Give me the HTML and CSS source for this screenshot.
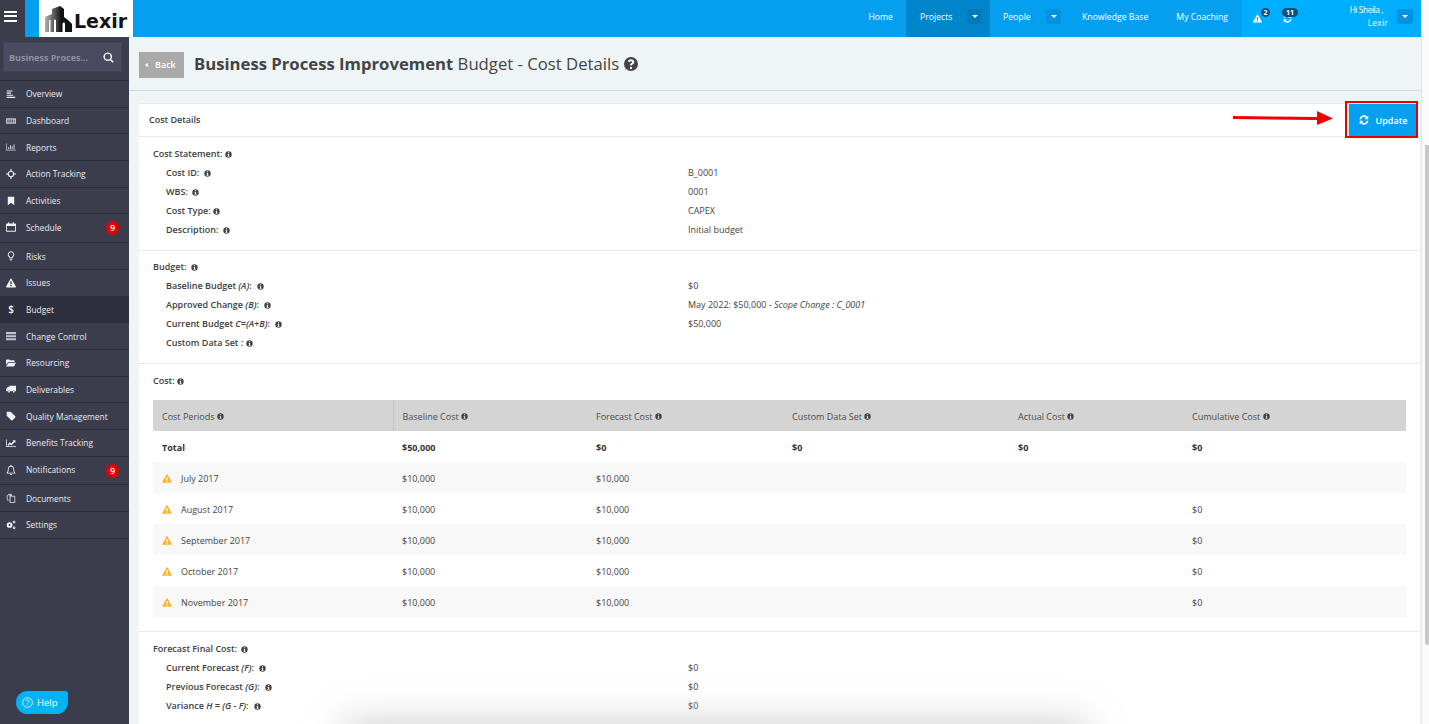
FILE: index.html
```html
<!DOCTYPE html>
<html lang="en">
<head>
<meta charset="utf-8">
<title>Business Process Improvement Budget - Cost Details</title>
<link rel="stylesheet" href="styles.css">
</head>
<body>
<svg class="defs" width="0" height="0" aria-hidden="true">
  <symbol id="i-info" viewBox="0 0 12 12"><path fill-rule="evenodd" d="M6 .5a5.500 5.500 0 1 0 0 11 5.500 5.500 0 0 0 0-11zM5 2.200h2v1.600H5zM4.500 5h2.500v3.600h.8V10H4.300V8.600h.9V6.300h-.7z"/></symbol>
  <symbol id="i-help" viewBox="0 0 14 14"><path fill-rule="evenodd" d="M7 0a7 7 0 1 0 0 14A7 7 0 0 0 7 0zM6 10h2v2H6zM7 2.300c1.900 0 3.300 1.100 3.300 2.700 0 1.200-.7 1.800-1.400 2.300-.6.400-.9.700-.9 1.200H6c0-1.200.5-1.900 1.300-2.400.6-.4.900-.6.900-1.100 0-.4-.5-.8-1.200-.8-.7 0-1.300.4-1.700 1L3.700 4.100C4.400 3 5.500 2.300 7 2.300z"/></symbol>
  <symbol id="i-warn" viewBox="0 0 14 13"><path fill-rule="evenodd" d="M7 .3c.3 0 .6.200.8.500l6 10.700c.3.600-.1 1.300-.8 1.300H1c-.7 0-1.100-.7-.8-1.300L6.200.8C6.400.5 6.700.3 7 .3zM6 4.200l.2 4.300h1.600L8 4.200zM6 9.400v1.800h2V9.400z"/></symbol>
  <symbol id="i-sync" viewBox="0 0 14 14"><path d="M13 .8v5H8l1.900-1.900A4.300 4.300 0 0 0 2.900 5.800H.6A6.500 6.500 0 0 1 11.500 2.300zM1 13.200v-5h5l-1.900 1.900a4.300 4.300 0 0 0 7-1.900h2.300A6.500 6.500 0 0 1 2.500 11.700z"/></symbol>
  <symbol id="i-overview" viewBox="0 0 14 14"><path d="M1 2h8v1.600H1zM1 5h6v1.600H1zM1 8h9v1.600H1zM1 11h12v1.600H1z"/></symbol>
  <symbol id="i-dash" viewBox="0 0 14 14"><path fill-rule="evenodd" d="M1 3h12a1 1 0 0 1 1 1v6a1 1 0 0 1-1 1H1a1 1 0 0 1-1-1V4a1 1 0 0 1 1-1zM2 5v4h1.500V5zM5 5v4h1.500V5zM8 5v4h1.500V5zM11 5v4h1V5z"/></symbol>
  <symbol id="i-chart" viewBox="0 0 14 14"><path d="M0 2h1v9h13v1H0zM3 7h1.500v3H3zM5.500 4.500H7V10H5.500zM8 6h1.500v4H8zM10.500 3H12v7h-1.500z"/></symbol>
  <symbol id="i-target" viewBox="0 0 14 14"><path fill-rule="evenodd" d="M6.200 0h1.600v2.300a4.800 4.800 0 0 1 3.900 3.900H14v1.600h-2.300a4.800 4.800 0 0 1-3.900 3.900V14H6.200v-2.300a4.800 4.800 0 0 1-3.900-3.900H0V6.200h2.300a4.800 4.800 0 0 1 3.900-3.900zM7 4a3 3 0 1 0 0 6 3 3 0 0 0 0-6z"/></symbol>
  <symbol id="i-bookmark" viewBox="0 0 14 14"><path d="M2.500 1h9v12L7 9.500 2.500 13z"/></symbol>
  <symbol id="i-cal" viewBox="0 0 14 14"><path fill-rule="evenodd" d="M3 .5h1.500V2h5V.5H11V2h2a1 1 0 0 1 1 1v9.500a1 1 0 0 1-1 1H1a1 1 0 0 1-1-1V3a1 1 0 0 1 1-1h2zM1.200 5.500v6.800h11.600V5.500z"/></symbol>
  <symbol id="i-bulb" viewBox="0 0 14 14"><path fill-rule="evenodd" d="M7 .5a4.500 4.500 0 0 1 3 7.800c-.6.600-.9 1.200-1 1.900H5c-.1-.7-.4-1.300-1-1.900A4.500 4.500 0 0 1 7 .5zm0 1.300a3.200 3.200 0 0 0-2.100 5.600c.5.500.9 1 1.100 1.600h2c.2-.6.600-1.100 1.100-1.600A3.200 3.200 0 0 0 7 1.800zM5.200 11h3.600v1.200H5.200zM6 12.800h2v1H6z"/></symbol>
  <symbol id="i-server" viewBox="0 0 14 14"><path d="M0 1.500h14v3H0zM0 5.800h14v3H0zM0 10h14v3H0z"/></symbol>
  <symbol id="i-folder" viewBox="0 0 14 14"><path d="M0 3a1 1 0 0 1 1-1h3.300l1.200 1.300H11a1 1 0 0 1 1 1V5.500H3.300L0 9.500zM3.800 6.500H14l-3 5.500H0z"/></symbol>
  <symbol id="i-truck" viewBox="0 0 14 14"><path d="M5 2.500h9v7.800h-1.500a1.700 1.700 0 0 0-3.300 0H5.800a1.700 1.700 0 0 0-3.300 0H0V7l3-3h2zM4.200 9.500a1.200 1.200 0 1 1 0 2.400 1.200 1.200 0 0 1 0-2.400zM10.800 9.500a1.200 1.200 0 1 1 0 2.400 1.200 1.200 0 0 1 0-2.400z"/></symbol>
  <symbol id="i-tag" viewBox="0 0 14 14"><path d="M1 1h5.500L13 7.500a1.200 1.200 0 0 1 0 1.700L9.200 13a1.200 1.200 0 0 1-1.700 0L1 6.500z"/></symbol>
  <symbol id="i-line" viewBox="0 0 14 14"><path d="M0 2h1v9.500h13v1H0zM2.200 9.400l3-3.500 2.300 1.800 3-3.500-1.200-1.100H13.200v3.800l-1.200-1.200-4.300 4.700-2.400-1.800-2.300 2.700z"/></symbol>
  <symbol id="i-bell" viewBox="0 0 14 14"><path fill-rule="evenodd" d="M6.200 0h1.600v1.200A4.300 4.300 0 0 1 11.400 5.400c0 3 .5 4.500 1.800 5.800v.8H.8v-.8C2.100 9.900 2.600 8.400 2.600 5.400A4.300 4.300 0 0 1 6.200 1.200zM7 2.300a3.200 3.200 0 0 0-3.300 3.200c0 2.400-.3 3.900-1.100 5.200h8.800c-.8-1.300-1.100-2.800-1.100-5.200A3.200 3.200 0 0 0 7 2.300zM5.500 12.500h3a1.500 1.500 0 0 1-3 0z"/></symbol>
  <symbol id="i-docs" viewBox="0 0 14 14"><path fill-rule="evenodd" d="M4 1h3l1.500 1.500V4H12a1 1 0 0 1 1 1v8a1 1 0 0 1-1 1H6a1 1 0 0 1-1-1v-2.500H2a1 1 0 0 1-1-1V4zM4.300 2.400 2.400 4.300v5h2.600V6zM6.400 5.400v7.200h5.200V5.400z"/></symbol>
  <symbol id="i-cogs" viewBox="0 0 14 14"><path fill-rule="evenodd" d="M5 3a4 4 0 1 1 0 8 4 4 0 0 1 0-8zm0 2.700a1.300 1.300 0 1 0 0 2.600 1.300 1.300 0 0 0 0-2.600zM11.300 1a1.900 1.900 0 1 1 0 3.800 1.900 1.900 0 0 1 0-3.800zm0 1.200a.7.700 0 1 0 0 1.400.7.700 0 0 0 0-1.400zM11.300 9a1.900 1.900 0 1 1 0 3.800 1.900 1.900 0 0 1 0-3.800zm0 1.200a.7.700 0 1 0 0 1.400.7.700 0 0 0 0-1.400z"/></symbol>
  <symbol id="i-search" viewBox="0 0 14 14"><path fill-rule="evenodd" d="M6 .5a5.500 5.500 0 0 1 4.400 8.800l3.200 3.200-1.300 1.300-3.200-3.200A5.500 5.500 0 1 1 6 .5zm0 1.800a3.700 3.700 0 1 0 0 7.400 3.700 3.700 0 0 0 0-7.400z"/></symbol>
</svg>

<div class="window">
  <div class="app">
    <header class="topbar">
      <button class="menu-toggle" aria-label="Menu"><span></span><span></span><span></span></button>
      <div class="logo">
        <svg class="logo-mark" viewBox="0 0 27 26"><defs><linearGradient id="bldg" x1="0" x2="1" y1="0" y2="0"><stop offset="0" stop-color="#b0b0b0"/><stop offset=".4" stop-color="#4a4a4a"/><stop offset=".6" stop-color="#111"/><stop offset="1" stop-color="#111"/></linearGradient></defs><path fill="url(#bldg)" d="M0 26V11l7-3V3l8-3 4 3v8l4 3 4 4v8z"/><path fill="#fff" d="M4 26V14h1.500v12zM9 26V15c0-1 .5-1.500 1-1.500s1 .5 1 1.500v11zM17.500 26V18c0-1 .6-1.500 1.300-1.500s1.200.5 1.200 1.500v8z"/></svg>
        <span class="logo-text">Lexir</span>
      </div>
      <nav class="nav">
        <a class="nav-item nav-home">Home</a>
        <a class="nav-item nav-active">Projects<i class="caret-box caret-dark"><b></b></i></a>
        <a class="nav-item nav-people">People<i class="caret-box"><b></b></i></a>
        <a class="nav-item nav-kb">Knowledge Base</a>
        <a class="nav-item nav-coach">My Coaching</a>
      </nav>
      <div class="user-zone">
        <span class="alert-icon"><svg class="ico-small"><use href="#i-warn"/></svg><em class="pill pill-one">2</em></span>
        <span class="alert-icon alert-sync"><svg class="ico-small"><use href="#i-sync"/></svg><em class="pill pill-two">11</em></span>
        <span class="hello"><span class="hello-first">Hi Sheila ,</span><br><span class="hello-second">Lexir</span></span>
        <i class="caret-box caret-user"><b></b></i>
      </div>
    </header>

    <div class="body-row">
      <aside class="sidebar">
        <div class="side-search">
          <div class="search-box"><span>Business Proces...</span><svg class="ico-search"><use href="#i-search"/></svg></div>
        </div>
        <ul class="side-nav">
          <li><svg class="side-ico"><use href="#i-overview"/></svg>Overview</li>
          <li><svg class="side-ico dim"><use href="#i-dash"/></svg>Dashboard</li>
          <li><svg class="side-ico dim"><use href="#i-chart"/></svg>Reports</li>
          <li><svg class="side-ico"><use href="#i-target"/></svg>Action Tracking</li>
          <li><svg class="side-ico"><use href="#i-bookmark"/></svg>Activities</li>
          <li class="has-badge"><svg class="side-ico"><use href="#i-cal"/></svg>Schedule<em class="badge">9</em></li>
          <li><svg class="side-ico"><use href="#i-bulb"/></svg>Risks</li>
          <li><svg class="side-ico"><use href="#i-warn"/></svg>Issues</li>
          <li class="current"><span class="side-ico dollar">$</span>Budget</li>
          <li><svg class="side-ico dim"><use href="#i-server"/></svg>Change Control</li>
          <li><svg class="side-ico"><use href="#i-folder"/></svg>Resourcing</li>
          <li><svg class="side-ico"><use href="#i-truck"/></svg>Deliverables</li>
          <li><svg class="side-ico"><use href="#i-tag"/></svg>Quality Management</li>
          <li><svg class="side-ico"><use href="#i-line"/></svg>Benefits Tracking</li>
          <li class="has-badge"><svg class="side-ico"><use href="#i-bell"/></svg>Notifications<em class="badge">9</em></li>
          <li><svg class="side-ico dim"><use href="#i-docs"/></svg>Documents</li>
          <li><svg class="side-ico"><use href="#i-cogs"/></svg>Settings</li>
        </ul>
      </aside>

      <main class="main">
        <div class="page-head">
          <a class="back"><i class="back-arrow"></i>Back</a>
          <h1><strong>Business Process Improvement</strong> Budget - Cost Details</h1>
          <svg class="ico-help"><use href="#i-help"/></svg>
        </div>

        <section class="card">
          <div class="card-head">
            <span class="card-title">Cost Details</span>
            <a class="update"><svg class="ico-sync"><use href="#i-sync"/></svg>Update</a>
          </div>

          <div class="block block-first">
            <div class="row head-row"><span>Cost Statement: <svg class="info tight"><use href="#i-info"/></svg></span></div>
            <div class="row"><span class="lab">Cost ID: <svg class="info gap"><use href="#i-info"/></svg></span><span>B_0001</span></div>
            <div class="row"><span class="lab">WBS: <svg class="info gap"><use href="#i-info"/></svg></span><span>0001</span></div>
            <div class="row"><span class="lab">Cost Type: <svg class="info tight"><use href="#i-info"/></svg></span><span>CAPEX</span></div>
            <div class="row"><span class="lab">Description: <svg class="info gap"><use href="#i-info"/></svg></span><span>Initial budget</span></div>
          </div>

          <div class="block">
            <div class="row head-row"><span>Budget: <svg class="info gap"><use href="#i-info"/></svg></span></div>
            <div class="row"><span class="lab">Baseline Budget <i>(A)</i>: <svg class="info"><use href="#i-info"/></svg></span><span>$0</span></div>
            <div class="row"><span class="lab">Approved Change <i>(B)</i>: <svg class="info"><use href="#i-info"/></svg></span><span>May 2022: $50,000 - <i>Scope Change : C_0001</i></span></div>
            <div class="row"><span class="lab">Current Budget <i>C=(A+B)</i>: <svg class="info"><use href="#i-info"/></svg></span><span>$50,000</span></div>
            <div class="row"><span class="lab">Custom Data Set : <svg class="info tight"><use href="#i-info"/></svg></span><span></span></div>
          </div>

          <div class="block block-table">
            <div class="row head-row"><span>Cost: <svg class="info tight"><use href="#i-info"/></svg></span></div>
            <table class="cost">
              <colgroup><col class="c1"><col class="c2"><col class="c3"><col class="c4"><col class="c5"><col class="c6"></colgroup>
              <thead>
                <tr>
                  <th class="split">Cost Periods <svg class="info tight"><use href="#i-info"/></svg></th>
                  <th>Baseline Cost <svg class="info tight"><use href="#i-info"/></svg></th>
                  <th>Forecast Cost <svg class="info tight"><use href="#i-info"/></svg></th>
                  <th>Custom Data Set <svg class="info tight"><use href="#i-info"/></svg></th>
                  <th>Actual Cost <svg class="info tight"><use href="#i-info"/></svg></th>
                  <th>Cumulative Cost <svg class="info tight"><use href="#i-info"/></svg></th>
                </tr>
              </thead>
              <tbody>
                <tr class="total"><td>Total</td><td>$50,000</td><td>$0</td><td>$0</td><td>$0</td><td>$0</td></tr>
                <tr class="alt"><td><svg class="warn"><use href="#i-warn"/></svg>July 2017</td><td>$10,000</td><td>$10,000</td><td></td><td></td><td></td></tr>
                <tr><td><svg class="warn"><use href="#i-warn"/></svg>August 2017</td><td>$10,000</td><td>$10,000</td><td></td><td></td><td>$0</td></tr>
                <tr class="alt"><td><svg class="warn"><use href="#i-warn"/></svg>September 2017</td><td>$10,000</td><td>$10,000</td><td></td><td></td><td>$0</td></tr>
                <tr><td><svg class="warn"><use href="#i-warn"/></svg>October 2017</td><td>$10,000</td><td>$10,000</td><td></td><td></td><td>$0</td></tr>
                <tr class="alt"><td><svg class="warn"><use href="#i-warn"/></svg>November 2017</td><td>$10,000</td><td>$10,000</td><td></td><td></td><td>$0</td></tr>
              </tbody>
            </table>
          </div>

          <div class="block block-last">
            <div class="row head-row"><span>Forecast Final Cost: <svg class="info gap"><use href="#i-info"/></svg></span></div>
            <div class="row"><span class="lab">Current Forecast <i>(F)</i>: <svg class="info"><use href="#i-info"/></svg></span><span>$0</span></div>
            <div class="row"><span class="lab">Previous Forecast <i>(G)</i>: <svg class="info"><use href="#i-info"/></svg></span><span>$0</span></div>
            <div class="row"><span class="lab">Variance <i>H = (G - F)</i>: <svg class="info"><use href="#i-info"/></svg></span><span>$0</span></div>
          </div>
        </section>
      </main>
    </div>
  </div>
  <div class="scrollbar"><div class="thumb"></div></div>

  <div class="highlight"></div>
  <svg class="arrow" viewBox="0 0 100 16"><path d="M0 6 84 7V1l16 7.500L84 15v-5L0 9z"/></svg>
  <a class="help-btn"><svg class="help-ring" viewBox="0 0 14 14"><circle cx="7" cy="7" r="6.200"/><path d="M5 5.400C5 4.200 6 3.600 7 3.600s2 .7 2 1.800c0 1.500-2 1.400-2 3"/><path d="M7 9.700v1.100"/></svg>Help</a>
  <div class="bottom-shade"></div>
</div>
</body>
</html>
```
FILE: styles.css
```css
* { box-sizing: border-box; }
html, body { margin: 0; height: 100%; overflow: hidden; }
body { font-family: "Open Sans", "Liberation Sans", sans-serif; font-size: 9px; color: #444; background: #fff; }
.defs { position: absolute; }
a { text-decoration: none; color: inherit; }

.window { position: relative; display: flex; width: 1429px; height: 724px; overflow: hidden; }
.app { width: 1421px; display: flex; flex-direction: column; }
.scrollbar { width: 8px; background: #fbfbfb; border-left: 1px solid #e4e6ea; padding-left: 3px; padding-top: 145px; }
.thumb { width: 4px; height: 500px; background: #c8c8c8; border-radius: 0 0 2px 2px; }

/* top bar */
.topbar { display: flex; height: 37px; background: #049fef; flex: none; color: #fff; }
.menu-toggle { width: 25px; background: #3b3d4d; border: 0; padding: 0 4px 5px; display: flex; flex-direction: column; justify-content: center; gap: 2.500px; }
.menu-toggle span { display: block; height: 2px; background: #fff; width: 13px; }
.logo { margin-left: 14px; width: 94px; background: #fff; display: flex; align-items: center; padding-left: 6px; gap: 2px; }
.logo-mark { width: 27px; height: 26px; flex: none; margin-top: 0; }
.logo-text { font-family: "DejaVu Sans", sans-serif; font-weight: 700; font-size: 19px; color: #141414; margin-top: 4px; line-height: 20px; }
.nav { margin-left: auto; display: flex; height: 100%; align-items: stretch; font-size: 8.700px; }
.nav-item { display: flex; align-items: center; white-space: nowrap; padding-bottom: 4px; }
.nav-home { padding-right: 13px; }
.nav-active { background: #0085cb; padding-left: 14px; padding-right: 8px; width: 84px; justify-content: space-between; }
.nav-people { padding-left: 13px; width: 71px; justify-content: space-between; }
.nav-kb { padding-left: 21px; }
.nav-coach { padding-right: 14px; padding-left: 28px; }
.caret-box { display: flex; align-items: center; justify-content: center; width: 15px; height: 15px; background: #0392df; border-radius: 3px; flex: none; }
.caret-dark { background: #0279ba; }
.caret-box b { width: 0; height: 0; border-left: 3px solid transparent; border-right: 3px solid transparent; border-top: 3px solid #fff; }
.user-zone { width: 179px; background: #00aeff; display: flex; align-items: center; padding-left: 11px; padding-bottom: 4px; }
.alert-icon { position: relative; display: block; width: 9px; height: 9px; margin-top: 3px; }
.alert-sync { margin-left: 21px; }
.ico-small { display: block; width: 9px; height: 9px; fill: #fff; }
.pill { position: absolute; top: -6px; left: 8px; font-style: normal; font-weight: 700; font-size: 7px; line-height: 9px; background: #0f4f78; border-radius: 5px; color: #fff; padding: 0 2.500px; }
.pill-two { left: -1px; padding: 0 4px; }
.hello { margin-left: auto; text-align: right; font-size: 8.300px; line-height: 12.500px; width: 60px; }
.hello-first { margin-right: 5px; letter-spacing: -.4px; }
.hello-second { letter-spacing: .3px; }
.caret-user { margin: 0 8px 0 9px; width: 16px; }

.body-row { flex: 1; display: flex; min-height: 0; }

/* sidebar */
.sidebar { width: 129px; flex: none; background: #3b3d4d; color: #e9e9ee; font-size: 8.400px; }
.side-search { height: 44px; padding: 5px 7px 0 3px; border-bottom: 1px solid #2c2e3a; }
.search-box { height: 30px; background: #4a4b60; border: 1px solid #42435a; display: flex; align-items: center; justify-content: space-between; padding: 0 7px 0 5px; color: #8f90a0; font-weight: 700; font-size: 9px; }
.ico-search { width: 11px; height: 11px; fill: #fff; }
.side-nav { list-style: none; margin: 0; padding: 0; }
.side-nav li { position: relative; display: flex; align-items: center; height: 26.700px; border-bottom: 1px solid #2c2e3a; padding-left: 6px; white-space: nowrap; }
.side-nav li.has-badge { height: 28.750px; padding-bottom: 2px; }
.side-nav li.current { background: #2d2f3d; border-bottom-color: #2d2f3d; }
.side-ico { width: 10px; height: 10px; fill: #f1f1f4; margin-right: 10px; flex: none; }
.side-ico.dim { fill: #c2c3cb; }
.dollar { color: #f1f1f4; font-weight: 600; font-size: 10px; text-align: center; line-height: 10px; }
.badge { position: absolute; left: 106px; top: 7px; width: 13px; height: 14px; border-radius: 7px; background: #e00000; color: #fff; font-style: normal; font-size: 9px; font-weight: 600; line-height: 14px; text-align: center; }

/* main */
.main { flex: 1; min-width: 0; background: #eff4f7; padding: 0 1px 0 10px; }
.page-head { height: 54px; margin-left: -10px; margin-right: -1px; padding-left: 10px; border-bottom: 1px solid #cddbe6; display: flex; align-items: center; margin-bottom: 12px; }
.back { width: 45px; height: 26px; background: #aaa; color: #fff; display: flex; align-items: center; padding-left: 6px; font-weight: 600; font-size: 9px; margin-top: 2px; }
.back-arrow { width: 0; height: 0; border-top: 2.500px solid transparent; border-bottom: 2.500px solid transparent; border-right: 3px solid #fff; margin-right: 7px; }
.page-head h1 { margin: 0 0 0 10px; font-size: 16.700px; font-weight: 400; color: #444; line-height: 24px; }
.page-head h1 strong { font-weight: 700; }
.ico-help { width: 14px; height: 14px; fill: #444; margin-left: 5px; margin-top: 1px; }

.card { background: #fff; height: 700px; border-top: 1px solid #e8eaec; }
.card-head { height: 33px; display: flex; align-items: center; justify-content: space-between; padding: 0 3px 0 10px; border-bottom: 1px solid #e7e9ec; font-weight: 600; color: #3e3e3e; }
.card-title { margin-top: -2px; }
.update { width: 68px; height: 32px; background: #049fef; color: #fff; font-weight: 600; display: flex; align-items: center; justify-content: center; gap: 7px; font-size: 9px; }
.ico-sync { width: 10px; height: 10px; fill: #fff; }

.block { padding: 6px 14px 11px; border-bottom: 1px solid #e7e9ec; }
.block-first { padding-top: 7px; }
.block-table { padding-top: 7px; padding-bottom: 14px; }
.block-last { padding-top: 7px; border-bottom: 0; }
.row { display: grid; grid-template-columns: 535px 1fr; height: 19px; align-items: center; line-height: 19px; }
.head-row, .lab { font-weight: 600; color: #3e3e3e; }
.lab { padding-left: 13px; }
.lab i { font-weight: 600; }
.info { width: 7px; height: 7px; fill: #444; vertical-align: -0.500px; margin-left: 3px; }
.info.gap { margin-left: 2px; }
.info.tight { margin-left: 0; }

.cost { margin-top: 10px; width: 1253px; border-collapse: collapse; table-layout: fixed; }
.c1 { width: 240px; } .c2 { width: 194px; } .c3 { width: 196px; } .c4 { width: 226px; } .c5 { width: 174px; } .c6 { width: 223px; }
.cost th { height: 31px; background: #d4d4d4; text-align: left; font-weight: 500; padding: 1px 0 0 9px; color: #4d4d4d; }
.cost th.split { border-right: 1px solid #c2c2c2; }
.cost td { height: 31px; padding: 1px 0 0 9px; }
.cost .total td { font-weight: 700; color: #333; }
.cost .alt td { background: #f8f8f8; }
.warn { width: 10px; height: 9px; fill: #f8b62c; margin-right: 9px; vertical-align: -1px; }

/* overlays */
.highlight { position: absolute; left: 1345px; top: 101px; width: 73px; height: 37px; border: 2.500px solid #e60000; pointer-events: none; }
.arrow { position: absolute; left: 1233px; top: 110px; width: 100px; height: 16px; fill: #f00000; }
.help-btn { position: absolute; left: 16px; top: 691px; width: 52px; height: 23px; background: #00b3f4; border-radius: 12px 3px 12px 12px; color: #fff; display: flex; align-items: center; padding: 0 0 1px 6px; font-size: 9.500px; gap: 4px; }
.help-ring { width: 11px; height: 11px; fill: none; stroke: #fff; stroke-width: 1; }
.bottom-shade { position: absolute; left: 355px; top: 736px; width: 720px; height: 20px; background: #d8d8d8; box-shadow: 0 0 34px 18px rgba(190,190,190,.6); border-radius: 30px; pointer-events: none; }
```
